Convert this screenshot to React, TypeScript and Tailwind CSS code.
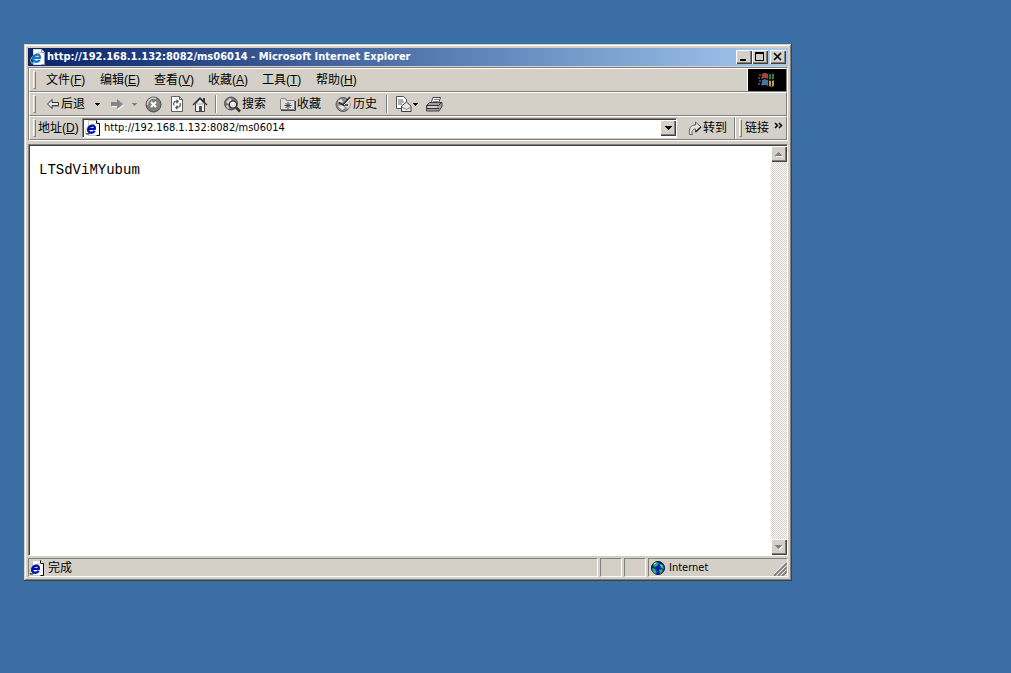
import type { ReactNode } from 'react';

const raised =
  'bg-[#d4d0c8] shadow-[inset_1px_1px_#fff,inset_-1px_-1px_#404040,inset_-2px_-2px_#808080]';

const menus = [
  { label: '文件', hotkey: 'F' },
  { label: '编辑', hotkey: 'E' },
  { label: '查看', hotkey: 'V' },
  { label: '收藏', hotkey: 'A' },
  { label: '工具', hotkey: 'T' },
  { label: '帮助', hotkey: 'H' },
];

const PageIcon = ({ light = false }: { light?: boolean }) => (
  <svg width="16" height="16" viewBox="0 0 16 16" className="shrink-0" aria-hidden>
    <path d="M3.5.5h8l3 3v12h-11z" fill="#fff" stroke={light ? '#d8e0ec' : '#c8c8c8'} />
    <path d="M11.5.5v3h3v12h-3" fill="none" stroke={light ? '#8494ac' : '#000'} />
    <path d="M1 13C-1 10 4 4 11.500 3.500" fill="none" stroke="#d8c860" />
    <path
      d="M9.800 10.800C7.500 14 2.600 13 3.200 9.300 3.800 5.200 10.800 4 9.800 8.800H4"
      fill="none"
      stroke={light ? '#1874c8' : '#0010b0'}
      strokeWidth="2.300"
    />
    <path d="M.8 13.500c1.500 1 3 .5 4-.5" fill="none" stroke={light ? '#58b8e8' : '#205048'} strokeWidth="1.500" />
  </svg>
);

const Caret = ({ muted = false }: { muted?: boolean }) => (
  <svg width="5" height="3" viewBox="0 0 5 3" aria-hidden shapeRendering="crispEdges">
    <path d="M0 0h5L2.500 3z" fill={muted ? '#808080' : '#000'} />
  </svg>
);

const BackIcon = () => (
  <svg width="14" height="12" viewBox="0 0 14 12" aria-hidden>
    <path d="M1.500 6 6 1.500v3h6.500v3H6v3z" fill="#e8e8e8" stroke="#303030" />
    <path d="M6 8h7" stroke="#606060" />
  </svg>
);

const ForwardIcon = () => (
  <svg width="14" height="12" viewBox="0 0 14 12" aria-hidden>
    <path d="M2 8.500h6v3L14 7" fill="none" stroke="#fff" />
    <path d="M1 4h6V1l6 5-6 5V8H1z" fill="#858585" />
  </svg>
);

const StopIcon = () => (
  <svg width="17" height="17" viewBox="0 0 17 17" aria-hidden>
    <circle cx="8.500" cy="8.500" r="7.500" fill="#808080" stroke="#484848" />
    <path d="M2.500 9A6 6 0 0 1 11 2.700" fill="none" stroke="#c8c8c8" strokeWidth="1.500" />
    <path d="m6 6 5 5m0-5-5 5" stroke="#fff" strokeWidth="2" />
  </svg>
);

const RefreshIcon = () => (
  <svg width="14" height="16" viewBox="0 0 14 16" aria-hidden>
    <path d="M1.500.5h8l3 3v12h-11z" fill="#fff" stroke="#606060" />
    <path d="M9.500.5v3h3" fill="none" stroke="#606060" />
    <path d="M4 9.500C3 6.500 4.500 5 7 5.500M10 7c1 3-.5 4.500-3 4" fill="none" stroke="#606060" strokeWidth="1.300" />
    <path d="M6.500 3 9 5.500 6.500 8zM7.500 9 5 11.500 7.500 14z" fill="#505050" />
  </svg>
);

const HomeIcon = () => (
  <svg width="16" height="16" viewBox="0 0 16 16" aria-hidden>
    <path d="M11 2h2v5h-2z" fill="#404040" />
    <path d="M3.500 8v7.500h9V8L8 3z" fill="#f4f4f4" stroke="#404040" />
    <path d="M1 9 8 2l7 7" fill="none" stroke="#303030" strokeWidth="1.300" />
    <path d="M7 10h3v5H7z" fill="#505050" />
    <path d="M5 8h6" stroke="#a0a0a0" />
  </svg>
);

const SearchIcon = () => (
  <svg width="17" height="17" viewBox="0 0 17 17" aria-hidden>
    <circle cx="7" cy="7.500" r="6.500" fill="#787878" stroke="#505050" />
    <path d="M2 6 6 2l2 2-4 4zM2 10l2-1 1 3-1 1z" fill="#d8d8d8" />
    <circle cx="9" cy="8.500" r="3.700" fill="#e4e4e4" stroke="#303030" strokeWidth="1.300" />
    <path d="m12 11.500 4 4" stroke="#303030" strokeWidth="2.500" />
    <path d="M7.500 8 9.500 6.500" stroke="#fff" strokeWidth="1.500" />
  </svg>
);

const FavoritesIcon = () => (
  <svg width="16" height="14" viewBox="0 0 16 14" aria-hidden>
    <path d="M.5 12.500v-10l1-1h4l1 2h8v9z" fill="#e0e0e0" stroke="#808080" />
    <path d="M1 13.500h14.500V4" fill="none" stroke="#404040" />
    <path d="M8 5v7M4.500 8.500h7M5.500 6l5 5m0-5-5 5" stroke="#404040" />
  </svg>
);

const HistoryIcon = () => (
  <svg width="17" height="16" viewBox="0 0 17 16" aria-hidden>
    <circle cx="8" cy="8.500" r="7" fill="#909090" stroke="#585858" />
    <path d="M8 8.500 13 3a7 7 0 0 1 0 10z" fill="#d8d8d8" />
    <path d="M3 5l3-2 2 3-3 1zM3 10l4-1 3 3-3 2z" fill="#e8e8e8" />
    <path d="m8 9 7-8M8 9 4 6.500M8 9h5" stroke="#282828" strokeWidth="1.500" />
    <path d="m9 9 6-6" stroke="#fff" />
  </svg>
);

const MailIcon = () => (
  <svg width="17" height="16" viewBox="0 0 17 16" aria-hidden>
    <path d="M1.500.5h7l3 3v9h-10z" fill="#fff" stroke="#505050" />
    <path d="M3 4h5M3 6h6M3 8h4" stroke="#606060" />
    <path d="m6.500 10 5-4 4.500 4v5.500H6.500z" fill="#e8e8e8" stroke="#404040" />
    <path d="m7 11 4.500 2.500L16 11" fill="none" stroke="#808080" />
  </svg>
);

const PrintIcon = () => (
  <svg width="17" height="15" viewBox="0 0 17 15" aria-hidden>
    <path d="m5 6.500 2-6h7.500l-2 6z" fill="#fff" stroke="#404040" />
    <path d="M8 2.500h5M7 4.500h5" stroke="#808080" />
    <path d="m.5 8.500 3-3h12.500v4l-3 4.500H.5z" fill="#a0a0a0" stroke="#404040" />
    <path d="M1 8.500h11.500l3-3M1 11.500h12" fill="none" stroke="#303030" />
    <path d="M2 10h9" stroke="#fff" />
  </svg>
);

const GoIcon = () => (
  <svg width="14" height="15" viewBox="0 0 14 15" aria-hidden>
    <path
      d="M1.500 13.500C.5 7 3 4 7.500 4V1L13 6l-5.500 5V8C5 8 3 10 4.500 13.500z"
      fill="#e4e4e4"
      stroke="#606060"
    />
    <path d="M7.500 11 13 6" stroke="#202020" strokeWidth="1.500" />
  </svg>
);

const GlobeIcon = () => (
  <svg width="14" height="14" viewBox="0 0 14 14" aria-hidden>
    <circle cx="7" cy="7" r="6.500" fill="#0820c0" stroke="#001040" />
    <path d="M2 3 5 1l3 1-2 3-3 1zM9 3l3 1 1 4-3-1zM1 7l3 1 2 3-2 2-2-2zM8 9l3-1 1 2-3 3z" fill="#28b848" />
    <path d="M3 3l2-1M9 4l2 1" stroke="#a0f0a0" />
  </svg>
);

const WindowsFlag = () => (
  <svg width="20" height="18" viewBox="0 0 20 18" aria-hidden>
    <path d="M2 4h4M1 7h4M2 10h4M1 13h4" stroke="#504858" strokeDasharray="2 1" strokeWidth="2" />
    <path d="M5 3q3-2 6 0v5q-3-2-6 0z" fill="#a04838" />
    <path d="M12 3q3 1 5-1v6q-3 1-5 0z" fill="#387848" />
    <path d="M5 9q3-2 6 0v6q-3-2-6 0z" fill="#4870a0" />
    <path d="M12 9q3 1 5 0v6q-3 1-5 0z" fill="#b8a048" />
    <path d="M11.500 2v13M5 8.500q3-2 6 0t6 0M14.500 3v12" fill="none" stroke="#101010" />
  </svg>
);

const Grip = () => (
  <span className="h-[18px] w-[3px] shrink-0 border border-t-white border-r-[#808080] border-b-[#808080] border-l-white" />
);

const Separator = () => (
  <span className="mx-[7px] h-[18px] w-[2px] shrink-0 border-l border-l-[#808080] bg-white" />
);

const ToolButton = ({ label, children, text }: { label: string; children: ReactNode; text?: boolean }) => (
  <button type="button" aria-label={label} className="flex h-5 shrink-0 items-center gap-[1px]">
    {children}
    {text && <span>{label}</span>}
  </button>
);

const TitleBar = () => (
  <header className="flex h-[18px] shrink-0 items-center bg-linear-to-r from-[#0a246a] to-[#a6caf0] pr-[2px] pl-[2px]">
    <PageIcon light />
    <h1 className="ml-[1px] flex-1 truncate font-['DejaVu_Sans_Condensed','DejaVu_Sans',sans-serif] text-[11px] leading-4 font-bold text-white">
      http://192.168.1.132:8082/ms06014 - Microsoft Internet Explorer
    </h1>
    <button type="button" aria-label="Minimize" className={`h-[14px] w-4 ${raised}`}>
      <svg width="16" height="14" shapeRendering="crispEdges">
        <path d="M4 9h6v2H4z" />
      </svg>
    </button>
    <button type="button" aria-label="Maximize" className={`h-[14px] w-4 ${raised}`}>
      <svg width="16" height="14" shapeRendering="crispEdges">
        <path d="M3 2h9v9H3zM4 4v6h7V4z" fillRule="evenodd" />
      </svg>
    </button>
    <button type="button" aria-label="Close" className={`ml-[2px] h-[14px] w-4 ${raised}`}>
      <svg width="16" height="14">
        <path d="m4 3 7 7m0-7-7 7" stroke="#000" strokeWidth="1.600" />
      </svg>
    </button>
  </header>
);

const MenuBar = () => (
  <div className="flex h-6 shrink-0 border border-t-white border-r-[#808080] border-b-[#808080] border-l-white">
    <nav className="flex flex-1 items-center pl-[3px]">
      <Grip />
      <div className="ml-[10px] flex gap-4">
        {menus.map(({ label, hotkey }) => (
          <button key={hotkey} type="button" className="w-[38px] whitespace-nowrap">
            {label}(<u className="underline-offset-1">{hotkey}</u>)
          </button>
        ))}
      </div>
    </nav>
    <div className="flex w-[39px] items-center justify-center border-l border-white bg-black">
      <WindowsFlag />
    </div>
  </div>
);

const ToolBar = () => (
  <div className="flex h-6 shrink-0 items-center border border-t-white border-r-[#808080] border-b-[#808080] border-l-white pl-[3px]">
    <Grip />
    <div className="ml-[10px] flex items-center">
      <ToolButton label="后退" text>
        <BackIcon />
      </ToolButton>
      <button type="button" aria-label="后退列表" className="ml-[10px]">
        <Caret />
      </button>
      <div className="ml-[10px] flex items-center gap-2">
        <ToolButton label="前进">
          <ForwardIcon />
        </ToolButton>
        <button type="button" aria-label="前进列表">
          <Caret muted />
        </button>
        <ToolButton label="停止">
          <StopIcon />
        </ToolButton>
        <ToolButton label="刷新">
          <RefreshIcon />
        </ToolButton>
        <ToolButton label="主页">
          <HomeIcon />
        </ToolButton>
      </div>
      <Separator />
      <div className="flex items-center gap-[14px]">
        <ToolButton label="搜索" text>
          <SearchIcon />
        </ToolButton>
        <ToolButton label="收藏" text>
          <FavoritesIcon />
        </ToolButton>
        <ToolButton label="历史" text>
          <HistoryIcon />
        </ToolButton>
      </div>
      <span className="w-[2px]" />
      <Separator />
      <ToolButton label="邮件">
        <MailIcon />
        <Caret />
      </ToolButton>
      <div className="ml-2 flex">
        <ToolButton label="打印">
          <PrintIcon />
        </ToolButton>
      </div>
    </div>
  </div>
);

const AddressBar = () => (
  <div className="flex h-6 shrink-0 items-center border border-t-white border-r-[#808080] border-b-[#808080] border-l-white pl-[3px]">
    <Grip />
    <label htmlFor="address" className="ml-[2px] w-11 whitespace-nowrap">
      地址(<u className="underline-offset-1">D</u>)
    </label>
    <div className="flex h-5 min-w-0 flex-1 items-center border border-t-[#808080] border-r-white border-b-white border-l-[#808080] bg-white pl-[2px] shadow-[inset_1px_1px_#404040]">
      <PageIcon />
      <input
        id="address"
        type="text"
        defaultValue="http://192.168.1.132:8082/ms06014"
        className="ml-[3px] min-w-0 flex-1 bg-transparent font-['DejaVu_Sans_Condensed','DejaVu_Sans',sans-serif] text-[11px] leading-4 outline-none"
      />
      <button
        type="button"
        aria-label="地址列表"
        className={`flex h-4 w-4 items-center justify-center ${raised}`}
      >
        <svg width="7" height="4" shapeRendering="crispEdges">
          <path d="M0 0h7L3.500 4z" />
        </svg>
      </button>
    </div>
    <div className="ml-[11px] flex w-[46px]">
      <ToolButton label="转到" text>
        <GoIcon />
      </ToolButton>
    </div>
    <span className="h-[22px] w-[2px] border-l border-[#808080] bg-white" />
    <div className="ml-[3px] flex items-center">
      <Grip />
    </div>
    <div className="ml-[3px] flex w-[41px] gap-[5px]">
      <button type="button" className="shrink-0">
        链接
      </button>
      <button type="button" aria-label="更多链接">
        <svg width="9" height="12" viewBox="0 0 9 12">
          <path d="m1 1 2.500 2.500L1 6m4-5 2.500 2.500L5 6" fill="none" stroke="#000" strokeWidth="1.500" />
        </svg>
      </button>
    </div>
  </div>
);

const ScrollArrow = ({ down = false }: { down?: boolean }) => (
  <button
    type="button"
    aria-label={down ? 'Scroll down' : 'Scroll up'}
    className={`flex h-4 w-4 items-center justify-center ${raised}`}
  >
    <svg width="8" height="5" viewBox="0 0 8 5" shapeRendering="crispEdges">
      <path d={down ? 'M1 1h7L4.500 5z' : 'M1 5h7L4.500 1z'} fill="#fff" />
      <path d={down ? 'M0 0h7L3.500 4z' : 'M0 4h7L3.500 0z'} fill="#808080" />
    </svg>
  </button>
);

const Viewport = () => (
  <main className="mt-[3px] flex min-h-0 flex-1 border border-t-[#808080] border-r-white border-b-white border-l-[#808080] bg-white">
    <div className="flex-1 border-t border-l border-[#404040] px-[9px] py-4">
      <p className="font-['Liberation_Mono',monospace] text-[14px] leading-4">LTSdViMYubum</p>
    </div>
    <div className="flex w-4 flex-col justify-between border-t border-[#404040] bg-[repeating-conic-gradient(#d4d0c8_0_25%,#fff_0_50%)] bg-size-[2px_2px]">
      <ScrollArrow />
      <ScrollArrow down />
    </div>
  </main>
);

const statusPane =
  'flex items-center border border-t-[#808080] border-r-white border-b-white border-l-[#808080]';

const StatusBar = () => (
  <footer className="mt-[2px] flex h-[19px] shrink-0 gap-[2px]">
    <div className={`flex-1 gap-[3px] ${statusPane}`}>
      <PageIcon />
      <span>完成</span>
    </div>
    <div className={`w-[22px] ${statusPane}`} />
    <div className={`w-[22px] ${statusPane}`} />
    <div className={`w-[140px] pl-[2px] ${statusPane}`}>
      <GlobeIcon />
      <span className="ml-[4px] flex-1 font-['DejaVu_Sans_Condensed','DejaVu_Sans',sans-serif] text-[11px]">
        Internet
      </span>
      <svg width="13" height="13" viewBox="0 0 13 13" className="self-end" aria-hidden>
        <path d="M0 13 13 0M4 13l9-9M8 13l5-5" stroke="#808080" strokeWidth="2" />
        <path d="M-1 12 12-1M3 12l9-9M7 12l5-5" stroke="#fff" />
      </svg>
    </div>
  </footer>
);

export default function App() {
  return (
    <div className="flex h-screen min-h-[400px] bg-[#3a6ea5] pt-11 pr-[219px] pb-[92px] pl-6 font-['Liberation_Sans','Noto_Sans_CJK_SC',sans-serif] text-[12px] leading-4 text-black">
      <section className="flex min-w-0 flex-1 flex-col bg-[#d4d0c8] p-1 shadow-[inset_-1px_-1px_#404040,inset_1px_1px_#d4d0c8,inset_-2px_-2px_#808080,inset_2px_2px_#fff]">
        <TitleBar />
        <div className="mt-[1px] flex shrink-0 flex-col border border-t-[#808080] border-r-white border-b-white border-l-[#808080]">
          <MenuBar />
          <ToolBar />
          <AddressBar />
        </div>
        <Viewport />
        <StatusBar />
      </section>
    </div>
  );
}
